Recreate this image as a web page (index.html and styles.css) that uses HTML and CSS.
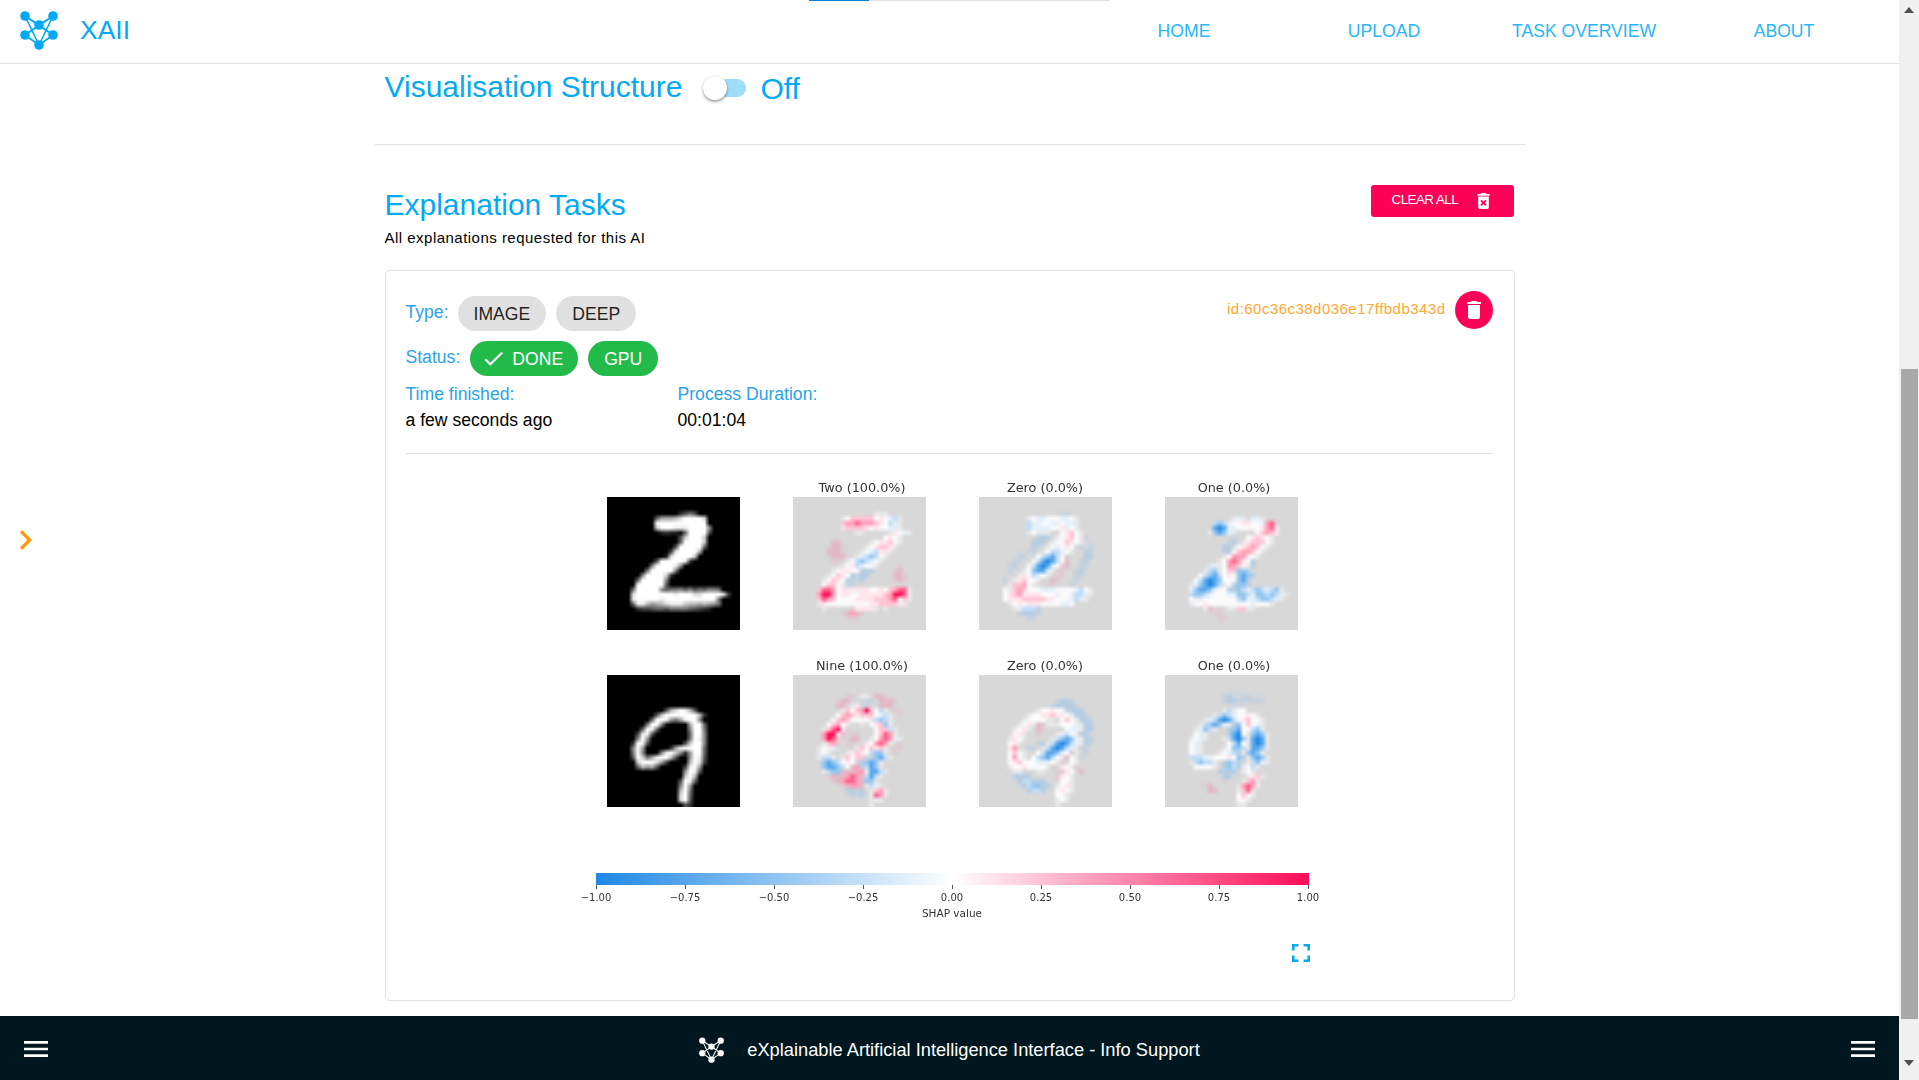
FILE: index.html
```html
<!DOCTYPE html>
<html lang="en">
<head>
<meta charset="utf-8">
<title>XAII</title>
<link rel="stylesheet" href="styles.css">
</head>
<body>
<div class="app">
  <div class="page">
    <header class="topbar">
      <div class="progress"><span class="progress-fill"></span></div>
      <a class="brand">
        <svg class="logo" viewBox="0 0 38 38"><g class="logo-lines"><path d="M5 4L19 13L33 4M5 4L33 23M33 4L5 23M5 23L19 13L33 23M5 23L19 33L33 23M5 4L19 33L33 4"/></g><g class="logo-dots"><circle cx="5" cy="4" r="4.8"/><circle cx="33" cy="4" r="4.8"/><circle cx="19" cy="13" r="4.8"/><circle cx="5" cy="23" r="4.8"/><circle cx="33" cy="23" r="4.8"/><circle cx="19" cy="33" r="4.8"/></g></svg>
        <span class="brand-name">XAII</span>
      </a>
      <nav class="nav">
        <a class="nav-item">HOME</a>
        <a class="nav-item">UPLOAD</a>
        <a class="nav-item">TASK OVERVIEW</a>
        <a class="nav-item">ABOUT</a>
      </nav>
    </header>

    <main class="main">
      <svg class="side-arrow" viewBox="8 6 8 12"><path d="M8.59,16.58L13.17,12L8.59,7.41L10,6L16,12L10,18L8.59,16.58Z"/></svg>
      <div class="content">
        <div class="vis-row">
          <h2 class="heading">Visualisation Structure</h2>
          <span class="switch"><span class="switch-thumb"></span></span>
          <span class="switch-label">Off</span>
        </div>
        <hr class="rule">
        <div class="section-head">
          <div>
            <h2 class="heading">Explanation Tasks</h2>
            <p class="subtitle">All explanations requested for this AI</p>
          </div>
          <button class="clear-btn">CLEAR ALL
            <svg class="clear-icon" viewBox="5 3 14 18"><path d="M6,19A2,2 0 0,0 8,21H16A2,2 0 0,0 18,19V7H6V19M8.46,11.88L9.87,10.47L12,12.59L14.12,10.47L15.53,11.88L13.41,14L15.53,16.12L14.12,17.53L12,15.41L9.87,17.53L8.46,16.12L10.59,14L8.46,11.88M15.5,4L14.5,3H9.5L8.5,4H5V6H19V4H15.5Z"/></svg>
          </button>
        </div>

        <section class="card">
          <div class="card-top">
            <div class="chip-rows">
              <div class="chip-row"><span class="label">Type:</span><span class="chip">IMAGE</span><span class="chip">DEEP</span></div>
              <div class="chip-row"><span class="label label-status">Status:</span><span class="chip chip-green chip-done"><svg class="check" viewBox="3 5 18 15"><path d="M21,7L9,19L3.5,13.5L4.91,12.09L9,16.17L19.59,5.59L21,7Z"/></svg>DONE</span><span class="chip chip-green">GPU</span></div>
            </div>
            <div class="id-wrap">
              <span class="task-id">id:60c36c38d036e17ffbdb343d</span>
              <button class="del-btn"><svg class="del-icon" viewBox="5 3 14 18"><path d="M19,4H15.5L14.5,3H9.5L8.5,4H5V6H19M6,19A2,2 0 0,0 8,21H16A2,2 0 0,0 18,19V7H6V19Z"/></svg></button>
            </div>
          </div>
          <div class="meta">
            <div><div class="label">Time finished:</div><div class="value">a few seconds ago</div></div>
            <div><div class="label">Process Duration:</div><div class="value">00:01:04</div></div>
          </div>
          <hr class="card-rule">

          <div class="figure">
            <div class="fig-cell"><span class="fig-title"></span><canvas class="digit" width="28" height="28" data-grid="img2"></canvas></div>
            <div class="fig-cell"><span class="fig-title">Two (100.0%)</span><canvas class="digit" width="28" height="28" data-grid="two"></canvas></div>
            <div class="fig-cell"><span class="fig-title">Zero (0.0%)</span><canvas class="digit" width="28" height="28" data-grid="zero2"></canvas></div>
            <div class="fig-cell"><span class="fig-title">One (0.0%)</span><canvas class="digit" width="28" height="28" data-grid="one2"></canvas></div>
            <div class="fig-cell"><span class="fig-title"></span><canvas class="digit" width="28" height="28" data-grid="img9"></canvas></div>
            <div class="fig-cell"><span class="fig-title">Nine (100.0%)</span><canvas class="digit" width="28" height="28" data-grid="nine"></canvas></div>
            <div class="fig-cell"><span class="fig-title">Zero (0.0%)</span><canvas class="digit" width="28" height="28" data-grid="zero9"></canvas></div>
            <div class="fig-cell"><span class="fig-title">One (0.0%)</span><canvas class="digit" width="28" height="28" data-grid="one9"></canvas></div>
          </div>

          <div class="colorbar">
            <div class="cb-bar"></div>
            <div class="cb-ticks">
              <span class="cb-tick"><i>−1.00</i></span>
              <span class="cb-tick"><i>−0.75</i></span>
              <span class="cb-tick"><i>−0.50</i></span>
              <span class="cb-tick"><i>−0.25</i></span>
              <span class="cb-tick"><i>0.00</i></span>
              <span class="cb-tick"><i>0.25</i></span>
              <span class="cb-tick"><i>0.50</i></span>
              <span class="cb-tick"><i>0.75</i></span>
              <span class="cb-tick"><i>1.00</i></span>
            </div>
            <div class="cb-label">SHAP value</div>
          </div>
          <div class="fs-row"><svg class="fs-icon" viewBox="5 5 14 14"><path d="M5,5H10V7H7V10H5V5M14,5H19V10H17V7H14V5M17,14H19V19H14V17H17V14M10,17V19H5V14H7V17H10Z"/></svg></div>
        </section>
      </div>
    </main>

    <footer class="footer">
      <svg class="menu-icon" viewBox="3 6 18 12" preserveAspectRatio="none"><path d="M3,6H21V8H3V6M3,11H21V13H3V11M3,16H21V18H3V16Z"/></svg>
      <div class="footer-center">
        <svg class="footer-logo" viewBox="0 0 38 38"><g class="logo-lines"><path d="M5 4L19 13L33 4M5 4L33 23M33 4L5 23M5 23L19 13L33 23M5 23L19 33L33 23M5 4L19 33L33 4"/></g><g class="logo-dots"><circle cx="5" cy="4" r="4.8"/><circle cx="33" cy="4" r="4.8"/><circle cx="19" cy="13" r="4.8"/><circle cx="5" cy="23" r="4.8"/><circle cx="33" cy="23" r="4.8"/><circle cx="19" cy="33" r="4.8"/></g></svg>
        <span class="footer-text">eXplainable Artificial Intelligence Interface - Info Support</span>
      </div>
      <svg class="menu-icon" viewBox="3 6 18 12" preserveAspectRatio="none"><path d="M3,6H21V8H3V6M3,11H21V13H3V11M3,16H21V18H3V16Z"/></svg>
    </footer>
  </div>
  <aside class="scrollbar">
    <span class="sb-up"></span>
    <span class="sb-thumb"></span>
    <span class="sb-down"></span>
  </aside>
</div>
<script src="app.js"></script>
</body>
</html>
```
FILE: styles.css
```css
* { box-sizing: border-box; }
html, body { margin: 0; height: 100%; overflow: hidden; background: #fff; }
body { font-family: "Liberation Sans", Arial, sans-serif; color: #000; }

.app { display: flex; width: 1919px; height: 1080px; }
.page { flex: 1; min-width: 0; display: flex; flex-direction: column; position: relative; }

.topbar { height: 64px; flex: none; display: flex; align-items: center; justify-content: space-between; padding: 0 15px 0 20px; border-bottom: 1px solid #e0e0e0; position: relative; }
.progress { position: absolute; left: 809px; top: 0; width: 301px; height: 1px; background: #e0e0e0; }
.progress-fill { display: block; width: 60px; height: 100%; background: #0a7fe0; }
.brand { display: flex; align-items: center; gap: 22px; color: #03a9f4; margin-top: -1px; }
.logo { width: 38px; height: 38px; color: #03a9f4; overflow: visible; }
.logo-lines { fill: none; stroke: currentColor; stroke-width: 1.6; }
.logo-dots { fill: currentColor; }
.brand-name { font-size: 26.5px; line-height: 30px; margin-top: -2px; }
.nav { display: flex; }
.nav-item { width: 200px; text-align: center; font-size: 17.6px; color: #29b6f6; margin-top: -1px; }

.main { flex: 1; min-height: 0; overflow: hidden; position: relative; }
.side-arrow { position: absolute; left: 19px; top: 466px; width: 13px; height: 20px; fill: #ff9800; }
.content { width: 1150px; margin: 0 auto; }

.vis-row { display: flex; align-items: center; padding: 4px 10px 0; height: 42px; }
.heading { margin: 0; font-size: 30px; line-height: 34px; font-weight: 400; color: #03a9f4; }
.switch { width: 43px; height: 18px; margin-left: 21px; margin-top: 2px; position: relative; display: block; }
.switch::before { content: ""; position: absolute; left: 14px; right: 0; top: 0; height: 18px; border-radius: 9px; background: #9fdcf8; }
.switch-thumb { position: absolute; left: 0; top: -3px; width: 24px; height: 24px; border-radius: 50%; background: #fff; box-shadow: 0 2px 3px rgba(0,0,0,.35), 0 0 2px rgba(0,0,0,.12); }
.switch-label { font-size: 30px; line-height: 34px; color: #03a9f4; margin-left: 14px; margin-top: 3px; }

.rule { margin: 38px 0 0; height: 1px; border: 0; background: #e0e0e0; }

.section-head { display: flex; justify-content: space-between; align-items: flex-start; padding: 40px 11px 0 10px; height: 125px; }
.section-head .heading { margin-top: 2px; line-height: 36px; }
.subtitle { margin: 5.5px 0 0; font-size: 15px; line-height: 18px; letter-spacing: .48px; }
.clear-btn { width: 143px; height: 32px; border: 0; border-radius: 3px; background: #ff0057; color: #fff; font: 13.5px "Liberation Sans", Arial, sans-serif; letter-spacing: -.6px; display: flex; align-items: center; padding: 0 24px 3px 21px; justify-content: space-between; }
.clear-icon { width: 13px; height: 16px; fill: #fff; margin-top: 3px; }

.card { width: 1130px; height: 731px; margin-left: 10px; border: 1px solid #e0e0e0; border-radius: 5px; padding: 25px 21px 0 20px; }
.card-top { display: flex; justify-content: space-between; align-items: flex-start; }
.chip-rows { display: flex; flex-direction: column; gap: 10px; }
.chip-row { display: flex; align-items: center; gap: 10px; }
.label { font-size: 17.6px; line-height: 20px; color: #2aa3ea; }
.chip-row .label { margin-top: -4px; margin-right: -1px; }
.chip-row .label-status { margin-right: 0; }
.chip { height: 35px; display: inline-flex; align-items: center; padding: 1px 16px 0; border-radius: 18px; background: #e0e0e0; color: rgba(0,0,0,.87); font-size: 17.6px; }
.chip-green { background: #22bb4a; color: #fff; }
.chip-done { padding-right: 15px; }
.check { width: 19px; height: 16px; fill: #fff; margin-right: 9px; margin-left: -2px; }
.id-wrap { display: flex; align-items: flex-start; gap: 9px; margin-top: -5px; }
.task-id { font-size: 15px; line-height: 18px; color: #ffa733; letter-spacing: .47px; margin-top: 9px; }
.del-btn { width: 38px; height: 38px; border-radius: 50%; border: 0; padding: 0; background: #ff0057; display: flex; align-items: center; justify-content: center; }
.del-icon { width: 14px; height: 18px; fill: #fff; }

.meta { display: grid; grid-template-columns: 272px 272px; margin-top: 8px; }
.value { font-size: 17.6px; line-height: 20px; margin-top: 6px; }
.card-rule { margin: 23px 0 0; border: 0; height: 1px; background: #e0e0e0; }

.figure { display: grid; grid-template-columns: repeat(4, 133px); column-gap: 53px; row-gap: 26px; margin: 24px 0 0 201px; filter: blur(.3px); }
.fig-cell { display: flex; flex-direction: column; align-items: center; }
.fig-cell:nth-child(2n) .fig-title { padding-left: 6px; }
.fig-title { height: 19px; font: 12.8px/20px "DejaVu Sans", sans-serif; color: #333; white-space: nowrap; }
.digit { width: 133px; height: 132.5px; display: block; filter: blur(.5px); }

.colorbar { margin: 66px 0 0 190px; width: 713px; filter: blur(.3px); }
.cb-bar { height: 12px; background: linear-gradient(90deg, #1e88e5, #fff 50%, #ff0d57); }
.cb-ticks { display: flex; justify-content: space-between; font: 10px/14px "DejaVu Sans", sans-serif; color: #333; }
.cb-tick { width: 1px; height: 19px; position: relative; background: linear-gradient(#555 0 4px, transparent 4px); }
.cb-tick i { position: absolute; left: 50%; top: 6px; transform: translateX(-50%); font-style: normal; white-space: nowrap; }
.cb-label { text-align: center; font: 10.5px/14px "DejaVu Sans", sans-serif; color: #333; margin-top: 2px; }

.fs-row { display: flex; justify-content: flex-end; margin: 24px 183px 0 0; }
.fs-icon { width: 18px; height: 18px; fill: #03a9f4; }

.footer { height: 64px; flex: none; background: #00171f; display: flex; align-items: center; justify-content: space-between; padding: 2px 24px 0; color: #fff; position: relative; }
.menu-icon { width: 24px; height: 16px; fill: #fff; }
.footer-center { display: flex; align-items: center; gap: 23px; margin-top: 2px; }
.footer-logo { width: 25px; height: 25px; color: #fff; overflow: visible; }
.footer-text { font-size: 18.25px; line-height: 22px; }

.scrollbar { width: 20px; flex: none; background: #f0f0f0; display: flex; flex-direction: column; align-items: center; position: relative; }
.sb-up { width: 0; height: 0; margin-top: 7px; border: 5px solid transparent; border-top: 0; border-bottom: 6px solid #505050; }
.sb-thumb { width: 17px; height: 650px; margin-top: 356px; background: #a8a8a8; }
.sb-down { width: 0; height: 0; margin-top: 41px; border: 5px solid transparent; border-bottom: 0; border-top: 6px solid #505050; }
```
FILE: app.js
```js
const HEAT = {
  '.': '#d8d8d8', g: '#e8e8e8', w: '#fbfbfb',
  p: '#dcccd2', q: '#e3b8c6', r: '#e8a3b8',
  1: '#ffe6ed', 2: '#ffc4d4', 3: '#ff9db6', 4: '#ff5c8a', 5: '#ff0f58',
  x: '#d0d6dc', y: '#c5d2de', z: '#b5cde3',
  A: '#e4f0fb', B: '#c0dcf6', C: '#93c6f1', D: '#5aa8ec', E: '#1e88e5'
};

const GRIDS = {
  img2: ['', '', '',
    '...............3575',
    '..........6aaabdffffd',
    '..........fffffffffff',
    '..........cfffeeeffff9',
    '...........2322.6ffff5',
    '...............5cfffc',
    '...............6ffffc',
    '..............5fffff6',
    '.............4effffa',
    '............2dffffc',
    '..........5fffffe3',
    '.........8ffffe8',
    '........7fffff7',
    '.......8ffffc3',
    '......6fffff8',
    '......ffffff5',
    '.....7fffff8677868576887',
    '.....dffffffffefffddffffd4',
    '.....efffffefffffffffff7',
    '.....6eeb9abdeeecbbaba97',
    '......3445665777765432'],
  img9: ['', '', '', '', '', '', '',
    '............5bdfeb5',
    '..........5cfffffffb3',
    '.........6ffe97aeff8',
    '........7ff81....aff6',
    '.......6fe6......8ff7',
    '......4ee5.......6ff8',
    '......8f9........7fe8',
    '.....3fe5.......5cff8',
    '.....8f9.....3aeffff6',
    '.....7f8...8efc839ff6',
    '.....5fc7aeffb5..9fe5',
    '......cfffd94....bfd4',
    '......6b9a5.....4ef9',
    '................9fe5',
    '................cfb',
    '...............5fe6',
    '...............8f9',
    '...............bf7',
    '...............df6',
    '...............df5',
    '................53'],
  two: ['', '', '',
    '.................ggg',
    '..........gw22222w1wABg',
    '..........233433321wBAg',
    '..........g22221w1wwAAg',
    '.............gg.....g1wAg',
    '...................w1wg',
    '........qq......gw112wg',
    '.......pqqp....gw1221g',
    '.......qqqp...gwAB11g',
    '.......pqqq..gABCBwg',
    '........pp.gwBCBAwg',
    '..........gw1BAwwg....p',
    '........gw11wwzzz....pq',
    '.......gw21wzyzz.....qqp',
    '......gw21wzyyz......pqp',
    '......w22wgyy',
    '.....2443w111111ww1w2344g',
    '.....3553w11ww1111123554g',
    '.....2432wwww111122234w2g',
    '.....g1wwwwwwwww1122221g',
    '......g.....p1111g.g',
    '..........pq3qp',
    '...........ppp'],
  zero2: ['', '', '',
    '................xxy',
    '..........gwAAwwwAAwg',
    '..........BAAwwAAwAAg',
    '..........BAAAAww1Awg',
    '..........gwggg..w12wg',
    '............zzz.gw12wgy',
    '...........zzz.gww21wg.x',
    '...........zy.gwAw1w.y.y',
    '........x.yy.gwBBAwg..zy',
    '........yy..wBCDBwp...zz',
    '.......yy..wBDEDBwq..yz',
    '......yz..wBDEDAwpq..yy',
    '......y..gwCDDAgpp..yz',
    '.....x..g1wBAwg.pp..yy',
    '.....y.g12wwg..qp..xy',
    '......g223wg..pp...y',
    '.....wg232wwwAAAwwwwABwg',
    '.....w1231111wwwAwwABBAg',
    '.....w1112222211wwwABAg',
    '......gw1w111wwwwAAw',
    '.......gABBBz',
    '........yzzzy',
    '..........yy'],
  one2: ['', '', '', '',
    '..............gAg.AAg',
    '..........BCBAww11wwA34p',
    '..........DEDAAwwwww1341',
    '.........gCDCAg....w2321',
    '..............y..w121wg',
    '.............yz.g1222wg',
    '............zz.w1232wg',
    '............zzw2332wg',
    '............gw3331wg',
    '...........gw3431wz',
    '.........gAgw332wgz',
    '........gBCgw22CCz',
    '.......wBCDBw1wCDCz',
    '......wBDEDCwwwCDz',
    '.....gACDEDBgwzCCz',
    '.....ACDDCAwwzzCBABCBABCg',
    '.....BCCBAwwwAACCBACCBCBAg',
    '.....wAAwwwwwwwBCAABCCBAg',
    '.....gww1wwwwwwwwwAwwwg',
    '........gq.p.gg22gg',
    '..........pp',
    '...........pp'],
  nine: ['', '', '', '',
    '...........pp.gg.qqp',
    '.........pqq..xyy.qqqp',
    '.........qq.g1xy..qqq',
    '..........g2w2352wBg.pp',
    '.........w2321222wABg.p',
    '........w232wwwwgBCBg',
    '.......w23wg..g.w12Cg',
    '......g2451p.....w22Bg',
    '......3551q.pp...w243g',
    '......3542.pqq..gw343Ag',
    '......g23p.pp..1w343g.p',
    '.....gw1A....g2w212g.pp',
    '.....gwA...g121wBCCg.p',
    '.....gBBg.g2w22yyCDBg',
    '......CDCBw1wyzCDCg',
    '......CDDCBwq3zBDCg',
    '......gBCCqqq33gDDBg',
    '.......pqqq343qBDBg',
    '........pq3443qCCg',
    '..........pq33qgBAg',
    '...........zzyz.g23g',
    '...........xyyz.g43g',
    '................gAg',
    '................g'],
  zero9: ['', '', '', '', '',
    '................yzzy',
    '...............yzzzzy',
    '............gww1wwyzzz',
    '..........gww11211wgzzy',
    '.........gwwwwgg.w2wgzzy',
    '........gw1gqpgggwwwAgzz',
    '.......gw1g.qp....wAAgzz',
    '.......w1g..p...gABwgzz',
    '......g1wg.....gBCDCAgzz',
    '......w1g...yzgBDEDBAgzy',
    '......13..yy.gBDEDBAgyy',
    '......w2wg..wBDDCAwpg.y',
    '......w3wg.wBCDBwgqwgy',
    '......w12wwwAAAwgp.wg',
    '......gww1wwwwgp.1wgp',
    '.......gg...gg..pp1w.q',
    '.......zzzz.....p1wg',
    '........zBBzzz...wwg',
    '........xzBCCzz.gw1g',
    '..........zBBz..w1wg',
    '................wwg',
    '................gwg',
    '................g'],
  one9: ['', '', '',
    '..............xx',
    '............yzxxyyxx',
    '............yzzyyyyyy',
    '..............x.x',
    '............gBgww',
    '..........gBCBAww1wg',
    '........gABDEDBw12wwg',
    '.......gBCDCAgzCw2wAg',
    '......gACBg..zCDwwBCg',
    '......wAg....zDEwgCDCg',
    '.....gwAg...gBDECgDEDg',
    '.....wAg.....wBDwgDEDg',
    '.....wAg....gwCCBgDDCg',
    '.....wAg...gwABzgCDCg',
    '.....BBBAAwww1wCzgCDCg',
    '.....gBCBBg.zCBz.gBCAg',
    '......wwwwg.zCBzgwBg',
    '...........zzzz.gwg',
    '............zz...g12g',
    '............p...g23g',
    '........pq.....g343g',
    '.........qq....g24g',
    '...............w2wg',
    '...............wwg',
    '...............gg']
};

document.querySelectorAll('canvas[data-grid]').forEach(function (canvas) {
  const name = canvas.dataset.grid;
  const rows = GRIDS[name];
  const ctx = canvas.getContext('2d');
  const isBase = name.indexOf('img') === 0;
  for (let y = 0; y < 28; y++) {
    const row = rows[y] || '';
    for (let x = 0; x < 28; x++) {
      const ch = row[x] || '.';
      if (isBase) {
        const v = ch === '.' ? 0 : parseInt(ch, 16) * 17;
        ctx.fillStyle = 'rgb(' + v + ',' + v + ',' + v + ')';
      } else {
        ctx.fillStyle = HEAT[ch] || HEAT['.'];
      }
      ctx.fillRect(x, y, 1, 1);
    }
  }
});
```
